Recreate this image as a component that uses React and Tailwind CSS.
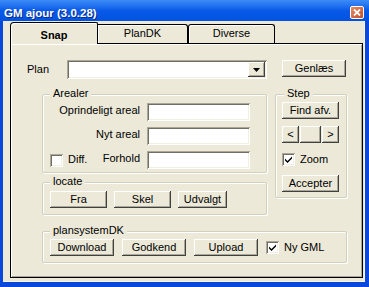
import React from "react";

const raised =
  "flex items-center justify-center bg-[#ece9d8] shadow-[inset_-1px_-1px_0_#404040,inset_1px_1px_0_#ffffff,inset_-2px_-2px_0_#aca899] text-black";
const sunken =
  "bg-white shadow-[inset_1px_1px_0_#aca899,inset_-1px_-1px_0_#ffffff,inset_2px_2px_0_#716f64,inset_-2px_-2px_0_#f1efe2]";
const group =
  "relative border border-[#d0d0bf] rounded-[2px] shadow-[1px_1px_0_#ffffff,inset_1px_1px_0_#ffffff]";

const Button = ({ children, w }) => (
  <div className={`${raised} h-[17px] ${w}`}>{children}</div>
);

const Check = ({ checked }) => (
  <div className={`${sunken} w-[13px] h-[13px] flex items-center justify-center shrink-0`}>
    {checked && (
      <svg width="7" height="7" viewBox="0 0 7 7">
        <polygon points="0,2.5 2.5,5 7,0.5 7,2.5 2.5,7 0,4.5" fill="#000" />
      </svg>
    )}
  </div>
);

const Legend = ({ children, left = "left-[7px]" }) => (
  <span className={`absolute -top-[8px] ${left} px-[3px] leading-[13px] bg-[#ece9d8]`}>
    {children}
  </span>
);

const Field = () => <div className={`${sunken} ml-[7px] w-[103px] h-[18px]`} />;

export default function App() {
  return (
    <div className="w-[369px] h-[287px] flex flex-col bg-[#0a48dc] font-['Liberation_Sans',Arial,sans-serif] text-[11px] text-black overflow-hidden">
      {/* title bar */}
      <div className="h-[21px] shrink-0 flex items-center pt-[4px] pl-[4px] pr-[5px] bg-gradient-to-b from-[#3d8cf7] via-[#0a5ae8] to-[#0052e0]">
        <span className="text-white font-bold text-[11.5px] leading-[14px] [text-shadow:1px_1px_0_#0a2a8a]">
          GM ajour (3.0.28)
        </span>
        <div className="ml-auto w-[14px] h-[13px] rounded-[2px] border border-white bg-gradient-to-br from-[#e58a62] to-[#c24f2a] flex items-center justify-center">
          <svg width="8" height="7" viewBox="0 0 8 7">
            <path d="M1 0.5 L7 6.5 M7 0.5 L1 6.5" stroke="#fff" strokeWidth="1.8" />
          </svg>
        </div>
      </div>

      {/* client area */}
      <div className="flex-1 flex flex-col ml-[3px] mr-[4px] mb-[5px] bg-[#ece9d8] pl-[7px] pr-[2px] pb-[4px] shadow-[inset_-1px_-1px_0_#f5f3ea]">
        {/* tabs */}
        <div className="h-[22px] shrink-0 flex items-end">
          <div className="relative z-10 -mb-px w-[88px] h-[22px] pt-[3px] flex items-center justify-center font-bold bg-[#ece9d8] border border-b-0 border-black rounded-tl-[4px] rounded-tr-[2px] shadow-[inset_1px_1px_0_#ffffff]">
            Snap
          </div>
          <div className="w-[90px] h-[19px] pb-[2px] flex items-center justify-center bg-[#ece9d8] border border-b-0 border-l-0 border-black rounded-tr-[3px] shadow-[inset_1px_1px_0_#ffffff]">
            PlanDK
          </div>
          <div className="w-[87px] h-[19px] pb-[2px] flex items-center justify-center bg-[#ece9d8] border border-b-0 border-black rounded-t-[3px] shadow-[inset_1px_1px_0_#ffffff]">
            Diverse
          </div>
        </div>

        {/* panel */}
        <div className="flex-1 flex flex-col border border-black shadow-[inset_1px_1px_0_#ffffff,inset_-1px_-1px_0_#aca899]">
          {/* Plan row */}
          <div className="flex items-start mt-[16px] pl-[16px]">
            <div className="w-[40px] h-[19px] flex items-center">Plan</div>
            <div className={`${sunken} w-[200px] h-[19px] flex justify-end p-[2px]`}>
              <div className={`${raised} w-[17px] h-[15px]`}>
                <svg width="7" height="4" viewBox="0 0 7 4">
                  <polygon points="0,0 7,0 3.5,4" fill="#000" />
                </svg>
              </div>
            </div>
            <div className="ml-[15px]">
              <Button w="w-[64px]">Genlæs</Button>
            </div>
          </div>

          {/* middle */}
          <div className="flex items-start mt-[15px] pl-[31px]">
            <div className="w-[225px] flex flex-col">
              <div className={`${group} pt-[8px] pb-[3px] flex flex-col gap-[6px]`}>
                <Legend>Arealer</Legend>
                <div className="flex items-center">
                  <div className="w-[97px] h-[18px] pb-[4px] flex items-center justify-end">
                    Oprindeligt areal
                  </div>
                  <Field />
                </div>
                <div className="flex items-center">
                  <div className="w-[97px] h-[18px] pb-[4px] flex items-center justify-end">
                    Nyt areal
                  </div>
                  <Field />
                </div>
                <div className="flex items-center">
                  <div className="w-[97px] h-[18px] flex items-center pl-[7px]">
                    <Check />
                    <span className="ml-[5px] mb-[1px]">Diff.</span>
                    <span className="ml-auto mb-[4px]">Forhold</span>
                  </div>
                  <Field />
                </div>
              </div>

              <div className={`${group} mt-[9px] pt-[8px] pb-[6px] pl-[7px] flex gap-[7px]`}>
                <Legend>locate</Legend>
                <Button w="w-[57px]">Fra</Button>
                <Button w="w-[57px]">Skel</Button>
                <Button w="w-[49px]">Udvalgt</Button>
              </div>
            </div>

            <div className={`${group} ml-[8px] w-[72px] pt-[7px] pb-[5px] pl-[6px] flex flex-col`}>
              <Legend left="left-[8px]">Step</Legend>
              <Button w="w-[57px]">Find afv.</Button>
              <div className="flex gap-[1px] mt-[7px]">
                <Button w="w-[17px]">&lt;</Button>
                <Button w="w-[21px]"></Button>
                <Button w="w-[17px]">&gt;</Button>
              </div>
              <div className="flex items-center mt-[10px] h-[13px]">
                <Check checked />
                <span className="ml-[5px]">Zoom</span>
              </div>
              <div className="mt-[9px]">
                <Button w="w-[57px]">Accepter</Button>
              </div>
            </div>
          </div>

          {/* plansystemDK */}
          <div className="mt-[16px] ml-[31px] w-[305px]">
            <div className={`${group} pt-[7px] pb-[6px] pl-[7px] flex items-center gap-[8px]`}>
              <Legend>plansystemDK</Legend>
              <Button w="w-[64px]">Download</Button>
              <Button w="w-[64px]">Godkend</Button>
              <Button w="w-[64px]">Upload</Button>
              <div className="flex items-center">
                <Check checked />
                <span className="ml-[5px]">Ny GML</span>
              </div>
            </div>
          </div>
        </div>
      </div>
    </div>
  );
}
